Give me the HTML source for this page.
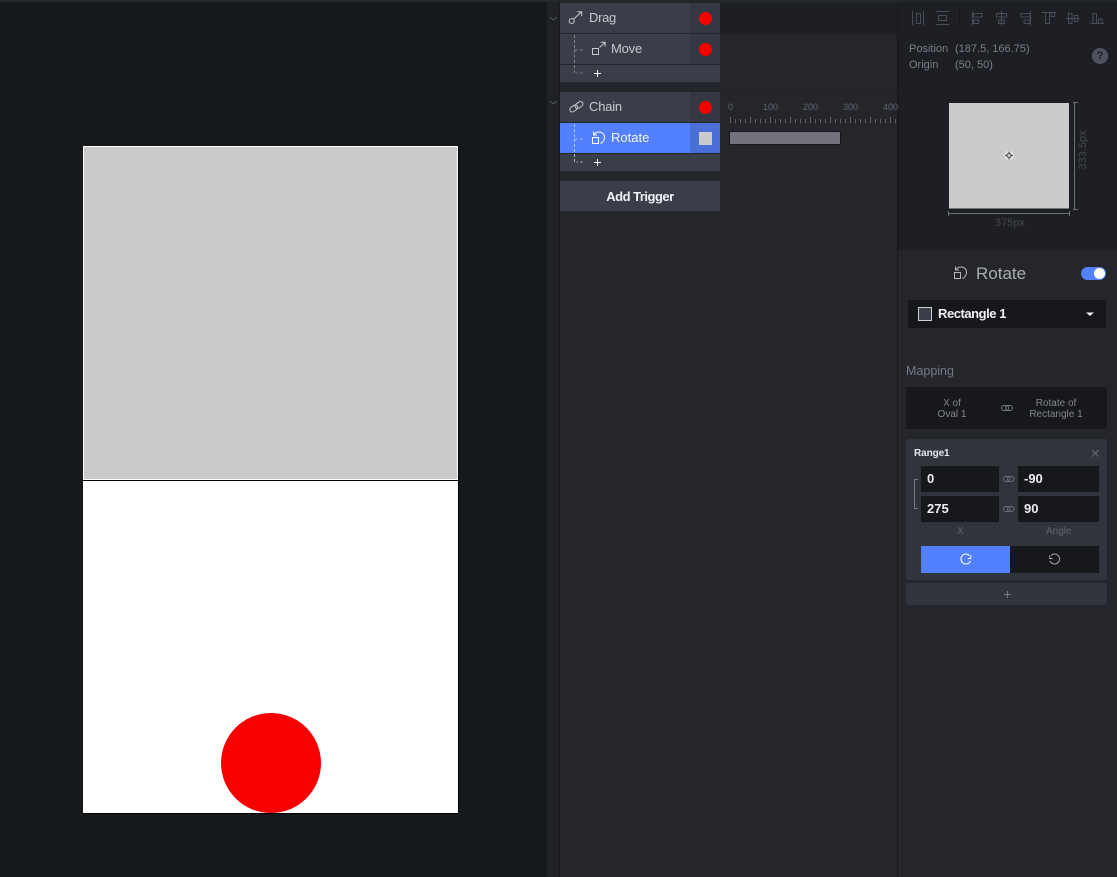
<!DOCTYPE html>
<html><head><meta charset="utf-8"><style>
*{box-sizing:border-box;margin:0;padding:0}
html,body{width:1117px;height:877px;overflow:hidden;background:#15191c;font-family:"Liberation Sans",sans-serif}
.a{position:absolute}
.row{position:absolute;left:560px;width:160px;background:#3a3e49;color:#c6c8ce;font-size:13px}
.row .t{position:absolute;top:7px;line-height:16px}
.cell{position:absolute;left:130px;top:0;width:30px;height:100%;background:#343843}
.dot{position:absolute;left:8.5px;top:9px;width:13px;height:13px;border-radius:50%;background:#f60000}
.txt{position:absolute;white-space:nowrap}
svg{position:absolute;overflow:visible}
.inp{position:absolute;height:26px;background:#16181b;color:#eceef0;font-size:13px;font-weight:bold;line-height:26px;padding-left:6px}
</style></head><body>
<div class="a" style="left:0;top:0;width:1117px;height:2px;background:#23262a"></div>

<!-- canvas -->
<div class="a" style="left:83px;top:146px;width:376px;height:668px;background:#000"></div>
<div class="a" style="left:83px;top:146px;width:375px;height:667px;background:#fff"></div>
<div class="a" style="left:84px;top:147px;width:373px;height:332px;background:#cacaca"></div>
<div class="a" style="left:83px;top:480px;width:375px;height:1px;background:#000"></div>
<div class="a" style="left:221px;top:713px;width:100px;height:100px;border-radius:50%;background:#f60000"></div>

<!-- timeline -->
<div class="a" style="left:547px;top:2px;width:351px;height:875px;background:#24262b"></div>
<div class="a" style="left:547px;top:2px;width:12px;height:875px;background:#1f2125"></div>
<div class="a" style="left:559px;top:2px;width:1px;height:875px;background:#17191c"></div>
<div class="a" style="left:720px;top:3px;width:178px;height:31px;background:#1d1f23"></div>
<div class="a" style="left:720px;top:92px;width:177px;height:1px;background:#1f2125"></div>
<div class="a" style="left:897px;top:2px;width:1px;height:875px;background:#17191c"></div>

<svg style="left:0;top:0" width="1117" height="877" fill="none">
<path d="M550 17l3.500 3 3.500-3M550 101l3.500 3 3.500-3" stroke="#565962" stroke-width="1"/>
</svg>

<div class="row" style="top:3px;height:30px"><div class="t" style="left:29px;letter-spacing:-.3px">Drag</div><div class="cell"><div class="dot"></div></div></div>
<div class="row" style="top:34px;height:30px"><div class="t" style="left:51px;letter-spacing:-.2px">Move</div><div class="cell"><div class="dot"></div></div></div>
<div class="row" style="top:65px;height:17px"></div>
<div class="row" style="top:92px;height:30px"><div class="t" style="left:29px;letter-spacing:-.2px">Chain</div><div class="cell"><div class="dot"></div></div></div>
<div class="row" style="top:123px;height:30px;background:#5280fe;color:#f2f5ff"><div class="t" style="left:51px">Rotate</div><div class="cell" style="background:#4a70d8"><div style="position:absolute;left:9px;top:9px;width:13px;height:13px;background:#cacaca"></div></div></div>
<div class="row" style="top:154px;height:17px"></div>
<div class="row" style="top:181px;height:30px;background:#3a3e49;color:#f0f1f3;font-weight:bold;font-size:13px;letter-spacing:-.5px;text-align:center;line-height:31px">Add Trigger</div>

<svg style="left:0;top:0" width="1117" height="877" fill="none" stroke="#c6c8ce" stroke-width="1">
<circle cx="571.700" cy="21" r="2.500"/><path d="M573.500 19.200l8-7.500M577.300 11.700h4.400v4.400"/>
<rect x="592.500" y="48.500" width="6" height="6"/><path d="M599.500 47.500l5.500-5M600.800 42.300h4.300v4.300"/>
<path d="M574.500 35v38h3.500M574.500 50h3.500M580 50h2.500M580 73h2.500" stroke="#7f828b" stroke-dasharray="3 2"/>
<path d="M574.500 124v38h3.500M574.500 139h3.500M580 139h2.500M580 162h2.500" stroke="#c5d2f5" stroke-dasharray="3 2" stroke-opacity=".8"/>
<path d="M594 73.500h7M597.500 70v7M594 162.500h7M597.500 159v7" stroke="#f0f0f0"/>
<rect x="569.500" y="106" width="8.500" height="5" rx="2.500" transform="rotate(-35 573.700 108.500)"/>
<rect x="574.800" y="102.500" width="8.500" height="5" rx="2.500" transform="rotate(-35 579 105)"/>
<g stroke="#fff"><rect x="592.500" y="137.500" width="6" height="6"/><path d="M594 134.500C596 131.500 601 131 603.500 134C605.500 137 604.500 141.500 600.500 143.500M593.500 131.500v3.500h3.500"/></g>
</svg>

<!-- ruler -->
<div class="txt" style="left:728px;top:102px;font-size:9px;color:#62656e">0</div>
<div class="txt" style="left:763px;top:102px;font-size:9px;color:#62656e">100</div>
<div class="txt" style="left:803px;top:102px;font-size:9px;color:#62656e">200</div>
<div class="txt" style="left:843px;top:102px;font-size:9px;color:#62656e">300</div>
<div class="txt" style="left:883px;top:102px;font-size:9px;color:#62656e">400</div>
<svg style="left:0;top:0" width="1117" height="877" fill="none" stroke="#62656e" stroke-width="1">
<path d="M730.500 117v6M735.500 119v4M740.500 119v4M745.500 119v4M750.500 117v6M755.500 119v4M760.500 119v4M765.500 119v4M770.500 117v6M775.500 119v4M780.500 119v4M785.500 119v4M790.500 117v6M795.500 119v4M800.500 119v4M805.500 119v4M810.500 117v6M815.500 119v4M820.500 119v4M825.500 119v4M830.500 117v6M835.500 119v4M840.500 119v4M845.500 119v4M850.500 117v6M855.500 119v4M860.500 119v4M865.500 119v4M870.500 117v6M875.500 119v4M880.500 119v4M885.500 119v4M890.500 117v6M895.500 119v4"/>
</svg>
<div class="a" style="left:729px;top:131px;width:112px;height:14px;background:#71727c;border:1px solid #15171a;border-radius:2px"></div>

<!-- right panel -->
<div class="a" style="left:898px;top:2px;width:219px;height:248px;background:#1d1f24"></div>
<div class="a" style="left:898px;top:33px;width:219px;height:1px;background:#191b1f"></div>
<div class="a" style="left:898px;top:250px;width:219px;height:627px;background:#24262b"></div>
<svg style="left:0;top:0" width="1117" height="877" fill="none" stroke="#4a4d56" stroke-width="1">
<path d="M912.500 11v14M923.500 11v14M916.500 13.500h4v10h-4zM936 11.500h13M936 24.500h13M938.500 15.500h8v5h-8z"/>
<path d="M959.500 10v15" stroke="#121316"/>
<path d="M972.500 11v14M973.500 13.500h8.500v3.500h-8.500zM973.500 20h5v3.500h-5z"/>
<path d="M1001.500 11v14M996.500 13.500h10v3.500h-10zM998.500 20h6v3.500h-6z"/>
<path d="M1030.500 11v14M1021 13.500h9v3.500h-9zM1024 20h6v3.500h-6z"/>
<path d="M1042 12.500h14M1045.500 13v10.500h4V13M1051.500 13v3.500h3V13"/>
<path d="M1066 18.500h13.500M1068.500 13.500h3.500v10h-3.500zM1074.500 15.500h3.500v6h-3.500z"/>
<path d="M1090.500 23.500h13.500M1093 13.500h3.500v10H1093zM1098.500 19h3.500v4.500h-3.500z"/>
</svg>
<div class="txt" style="left:909px;top:42px;font-size:11px;line-height:14px;color:#7b7e87">Position</div>
<div class="txt" style="left:955px;top:42px;font-size:11px;line-height:14px;color:#7b7e87">(187.5, 166.75)</div>
<div class="txt" style="left:909px;top:58px;font-size:11px;line-height:14px;color:#7b7e87">Origin</div>
<div class="txt" style="left:955px;top:58px;font-size:11px;line-height:14px;color:#7b7e87">(50, 50)</div>
<div class="a" style="left:1092px;top:48px;width:16px;height:16px;border-radius:50%;background:#50535f;color:#1d1f24;font-size:11px;font-weight:bold;text-align:center;line-height:16px">?</div>

<div class="a" style="left:949px;top:103px;width:120px;height:105px;background:#cbcbcb"></div>
<div class="a" style="left:949px;top:208px;width:120px;height:1px;background:#6e7075"></div>
<svg style="left:0;top:0" width="1117" height="877" fill="none" stroke="#6e7077" stroke-width="1">
<path d="M948.500 211v5M1069.500 211v5M949 213.500h120M1073 102.500h5M1073 209.500h5M1074.500 102v108"/>
<circle cx="1009" cy="155.500" r="4" stroke="#e6e6e6" stroke-width="1.500"/>
<circle cx="1009" cy="155.500" r="2" stroke="#555"/><path d="M1009 151.500v2M1009 157.500v2M1005 155.500h2M1011 155.500h2" stroke="#444"/>
</svg>
<div class="txt" style="left:995px;top:217px;font-size:11px;color:#45474e">375px</div>
<div class="txt" style="left:1061px;top:144px;width:44px;text-align:center;font-size:11px;color:#45474e;transform:rotate(-90deg);transform-origin:center">333.5px</div>

<svg style="left:0;top:0" width="1117" height="877" fill="none" stroke="#b5b7bd" stroke-width="1">
<rect x="954.500" y="272.500" width="6" height="6"/><path d="M956 269.500C958 266.500 963 266 965.500 269C967.500 272 966.500 276.500 962.500 278.500M955.500 266.500v3.500h3.500"/>
</svg>
<div class="txt" style="left:976px;top:264px;font-size:17px;line-height:20px;color:#a9abb2">Rotate</div>
<div class="a" style="left:1081px;top:267px;width:25px;height:13px;border-radius:7px;background:#5280fe"></div>
<div class="a" style="left:1094px;top:268px;width:11px;height:11px;border-radius:50%;background:#fff"></div>

<div class="a" style="left:908px;top:300px;width:198px;height:28px;background:#15171a"></div>
<div class="a" style="left:918px;top:307px;width:14px;height:14px;background:#3a3e49;border:1px solid #cfd0d4"></div>
<div class="txt" style="left:938px;top:306px;font-size:13px;letter-spacing:-.45px;line-height:16px;font-weight:bold;color:#f0f1f3">Rectangle 1</div>
<svg style="left:0;top:0" width="1117" height="877"><path d="M1086 312.500h8l-4 3.500z" fill="#f0f0f0"/></svg>

<div class="txt" style="left:906px;top:363px;font-size:12.500px;line-height:16px;color:#777a84">Mapping</div>
<div class="a" style="left:906px;top:387px;width:201px;height:42px;background:#16181c;border-radius:2px"></div>
<div class="txt" style="left:922px;top:398px;width:60px;text-align:center;font-size:10px;line-height:11px;color:#85878f">X of<br>Oval 1</div>
<div class="txt" style="left:1020px;top:398px;width:72px;text-align:center;font-size:10px;line-height:11px;color:#85878f">Rotate of<br>Rectangle 1</div>

<div class="a" style="left:906px;top:439px;width:201px;height:141px;background:#31343c;border-radius:2px"></div>
<div class="txt" style="left:914px;top:447px;font-size:10px;line-height:14px;font-weight:bold;color:#e6e7ea;letter-spacing:-.1px">Range1</div>
<div class="inp" style="left:921px;top:466px;width:78px">0</div>
<div class="inp" style="left:1018px;top:466px;width:81px">-90</div>
<div class="inp" style="left:921px;top:496px;width:78px">275</div>
<div class="inp" style="left:1018px;top:496px;width:81px">90</div>
<div class="txt" style="left:957px;top:526px;font-size:10px;line-height:12px;color:#63666e">X</div>
<div class="txt" style="left:1046px;top:526px;font-size:10px;line-height:12px;color:#63666e">Angle</div>
<div class="a" style="left:921px;top:546px;width:89px;height:27px;background:#5280fe"></div>
<div class="a" style="left:1010px;top:546px;width:89px;height:27px;background:#16181c"></div>
<div class="a" style="left:906px;top:583px;width:201px;height:22px;background:#31343c;border-radius:2px"></div>

<svg style="left:0;top:0" width="1117" height="877" fill="none" stroke="#6b6e76" stroke-width="1">
<rect x="1001.500" y="405.500" width="7" height="5" rx="2.500" stroke="#777a82"/><rect x="1005.500" y="405.500" width="7" height="5" rx="2.500" stroke="#777a82"/>
<path d="M1092 450l6.500 6.500M1098.500 450l-6.500 6.500"/>
<path d="M918 479.500h-3.500v29h3.500" stroke="#767982"/>
<rect x="1003.500" y="476.500" width="6.500" height="5" rx="2.500"/><rect x="1007.500" y="476.500" width="6.500" height="5" rx="2.500"/>
<rect x="1003.500" y="506.500" width="6.500" height="5" rx="2.500"/><rect x="1007.500" y="506.500" width="6.500" height="5" rx="2.500"/>
<path d="M969.500 555.500A5 5 0 1 0 970.500 561" stroke="#fff"/><path d="M970.800 555.500v3h-3" stroke="#fff"/>
<path d="M1051 555.500A5 5 0 1 1 1050 561" stroke="#a4a6ac"/><path d="M1049.700 555.500v3h3" stroke="#a4a6ac"/>
<path d="M1004 594.500h7M1007.500 591v7" stroke="#777a82"/>
</svg>
</body></html>
